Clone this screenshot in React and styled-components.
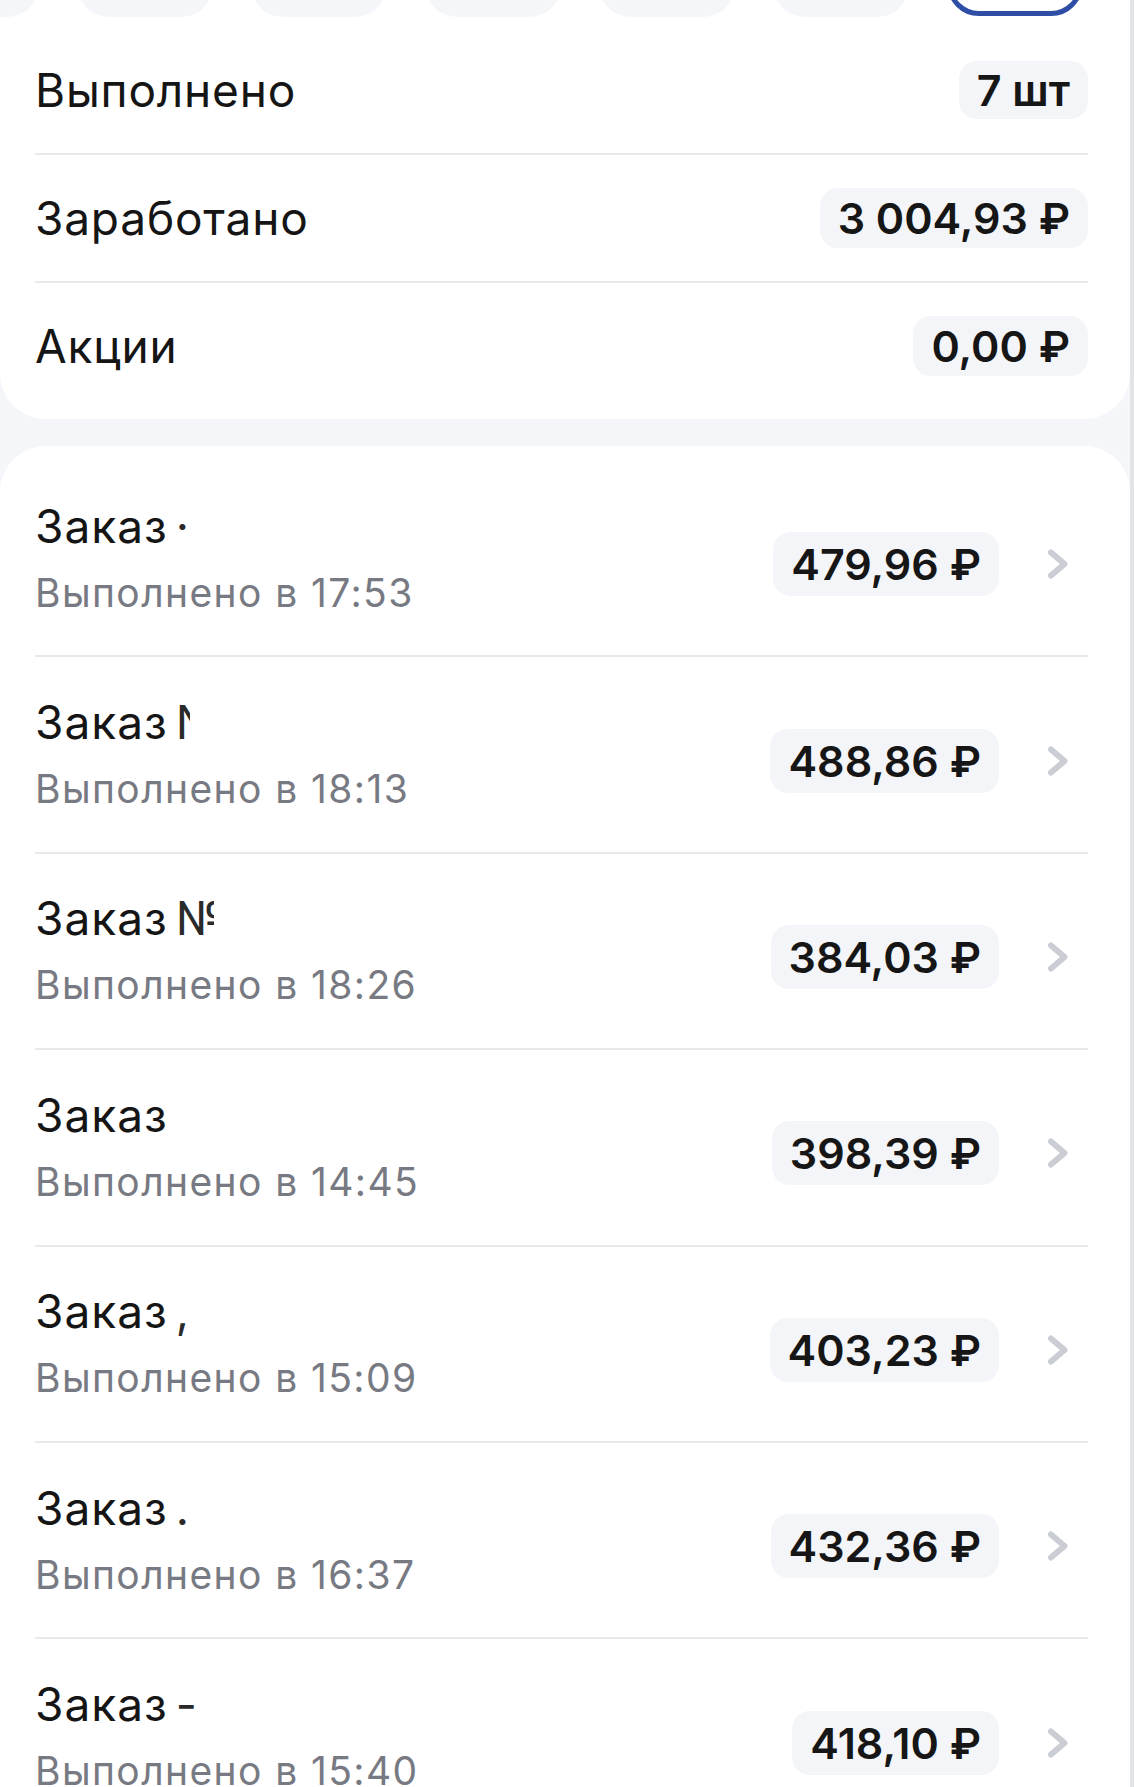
import React from 'react';
import styled, { createGlobalStyle } from 'styled-components';

const GlobalStyle = createGlobalStyle`
  html, body {
    margin: 0;
    padding: 0;
    background: #f4f6fa;
  }
  body {
    font-family: Inter, "Noto Sans", "Liberation Sans", sans-serif;
    color: #151515;
  }
`;

const Page = styled.div`
  width: 1130px;
  height: 1787px;
  overflow: hidden;
  background: #f4f6fa;
  border-right: 4px solid #e3e4e7;
  display: flex;
  flex-direction: column;
  gap: 27px;
`;

const Header = styled.div`
  background: #ffffff;
  border-radius: 0 0 46px 46px;
  display: flex;
  flex-direction: column;
`;

const DateStrip = styled.div`
  height: 18px;
  display: flex;
  justify-content: flex-end;
  align-items: flex-end;
  gap: 38px;
  padding-right: 47px;
  overflow: hidden;
`;

const DateChip = styled.div`
  flex-shrink: 0;
  width: 136px;
  height: 120px;
  box-sizing: border-box;
  border-radius: 32px;
  background: ${p => (p.$active ? '#ffffff' : '#f4f6fa')};
  border: ${p => (p.$active ? '5px solid #2e4ea6' : 'none')};
  margin-bottom: ${p => (p.$active ? 2 : 1)}px;
`;

const SummaryList = styled.div`
  padding: 9px 42px 10px 35px;
  display: flex;
  flex-direction: column;
`;

const SummaryRow = styled.div`
  height: 126px;
  display: flex;
  align-items: center;
  justify-content: space-between;
  border-bottom: ${p => (p.$last ? 'none' : '2px solid #e8e9ec')};
`;

const Label = styled.span`
  font-size: 46px;
  font-weight: 400;
  color: #151515;
  letter-spacing: 0.8px;
`;

const Pill = styled.span`
  display: inline-flex;
  align-items: center;
  height: ${p => p.$h || 60}px;
  margin-top: ${p => p.$shift || 0}px;
  padding: 0 18px;
  border-radius: 18px;
  background: #f4f5f8;
  font-size: 43px;
  font-weight: 600;
  color: #161616;
  white-space: nowrap;
`;

const OrdersCard = styled.div`
  background: #ffffff;
  border-radius: 46px 46px 0 0;
  padding: 15px 42px 0 35px;
  display: flex;
  flex-direction: column;
`;

const OrderRow = styled.div`
  height: 194.4px;
  flex-shrink: 0;
  display: flex;
  align-items: center;
  border-bottom: 2px solid #e8e9ec;
`;

const OrderInfo = styled.div`
  flex: 1;
  display: flex;
  flex-direction: column;
`;

const OrderTitle = styled.div`
  font-size: 46px;
  line-height: 50px;
  color: #151515;
  letter-spacing: 1px;
  white-space: nowrap;
`;

const Mark = styled.span`
  position: relative;
  margin-left: 8px;
  color: #2a2a2a;
`;

const Mask = styled.span`
  position: absolute;
  top: 0;
  bottom: 0;
  left: ${p => p.$from}px;
  width: 60px;
  background: #ffffff;
`;

const OrderTime = styled.div`
  margin-top: 19px;
  font-size: 39px;
  line-height: 46px;
  color: #777a82;
  letter-spacing: 1.4px;
  white-space: nowrap;
`;

const ChevronBox = styled.div`
  width: 24px;
  height: 32px;
  margin: 12px 18px 0 47px;
  display: flex;
  align-items: center;
  justify-content: center;
`;

const Chevron = () => (
  <svg width="24" height="32" viewBox="0 0 24 32">
    <path d="M5 4.5 L18.5 16 L5 27.5" fill="none" stroke="#cbcdd5" strokeWidth="6" strokeLinecap="round" strokeLinejoin="round" />
  </svg>
);

const orders = [
  { mark: '·', mask: null, time: '17:53', sum: '479,96 ₽' },
  { mark: 'N', mask: 14, time: '18:13', sum: '488,86 ₽' },
  { mark: '№', mask: 38, time: '18:26', sum: '384,03 ₽' },
  { mark: '', mask: null, time: '14:45', sum: '398,39 ₽' },
  { mark: ',', mask: null, time: '15:09', sum: '403,23 ₽' },
  { mark: '.', mask: null, time: '16:37', sum: '432,36 ₽' },
  { mark: '-', mask: null, time: '15:40', sum: '418,10 ₽' },
];

export default function App() {
  return (
    <>
      <GlobalStyle />
      <Page>
        <Header>
          <DateStrip>
            {[0, 1, 2, 3, 4, 5, 6].map(i => (
              <DateChip key={i} $active={i === 6} />
            ))}
          </DateStrip>
          <SummaryList>
            <SummaryRow>
              <Label>Выполнено</Label>
              <Pill $h={58}>7 шт</Pill>
            </SummaryRow>
            <SummaryRow>
              <Label>Заработано</Label>
              <Pill>3 004,93 ₽</Pill>
            </SummaryRow>
            <SummaryRow $last>
              <Label>Акции</Label>
              <Pill>0,00 ₽</Pill>
            </SummaryRow>
          </SummaryList>
        </Header>
        <OrdersCard>
          {orders.map((o, i) => (
            <OrderRow key={i}>
              <OrderInfo>
                <OrderTitle>
                  Заказ
                  {o.mark && (
                    <Mark>
                      {o.mark}
                      {o.mask !== null && <Mask $from={o.mask} />}
                    </Mark>
                  )}
                </OrderTitle>
                <OrderTime>Выполнено в {o.time}</OrderTime>
              </OrderInfo>
              <Pill $h={64} $shift={12}>{o.sum}</Pill>
              <ChevronBox>
                <Chevron />
              </ChevronBox>
            </OrderRow>
          ))}
        </OrdersCard>
      </Page>
    </>
  );
}
